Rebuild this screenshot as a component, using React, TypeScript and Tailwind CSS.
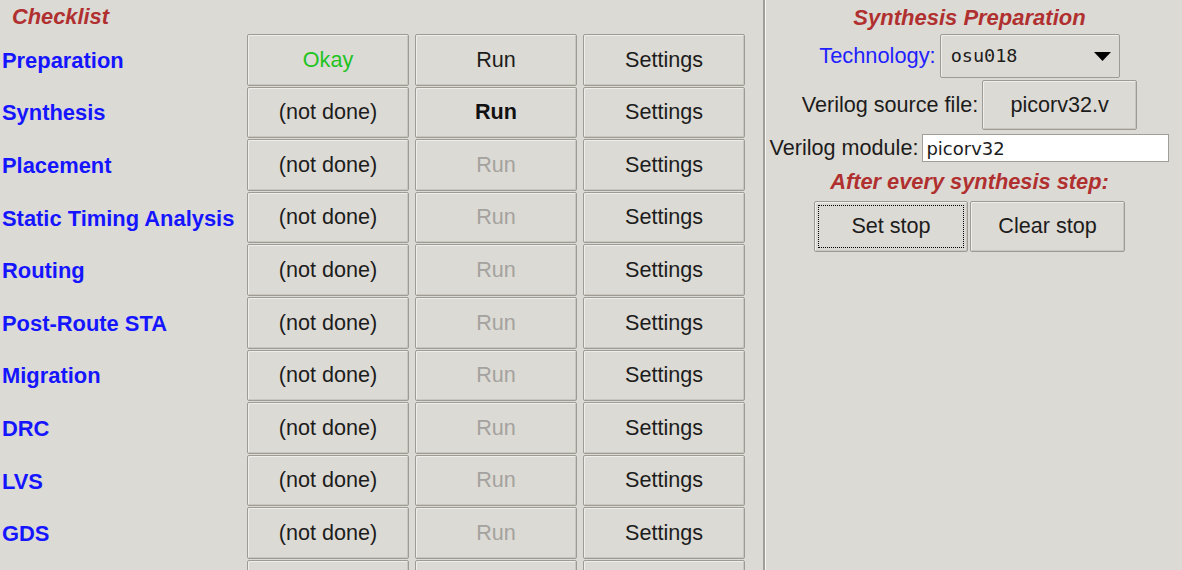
import React from "react";

type Step = { name: string; status: string; ok?: boolean; run: "enabled" | "active" | "disabled" };

const steps: Step[] = [
  { name: "Preparation", status: "Okay", ok: true, run: "enabled" },
  { name: "Synthesis", status: "(not done)", run: "active" },
  { name: "Placement", status: "(not done)", run: "disabled" },
  { name: "Static Timing Analysis", status: "(not done)", run: "disabled" },
  { name: "Routing", status: "(not done)", run: "disabled" },
  { name: "Post-Route STA", status: "(not done)", run: "disabled" },
  { name: "Migration", status: "(not done)", run: "disabled" },
  { name: "DRC", status: "(not done)", run: "disabled" },
  { name: "LVS", status: "(not done)", run: "disabled" },
  { name: "GDS", status: "(not done)", run: "disabled" },
];

// Tk "clam" style raised button
const TkButton: React.FC<{ className?: string; children?: React.ReactNode }> = ({ className = "", children }) => (
  <div
    className={
      "flex items-center justify-center rounded-[2px] border border-[#9e9b94] bg-[#dcdad5] shadow-[inset_1px_1px_0_#efeeeb,inset_-1px_-1px_0_#c9c6bf] text-[21.6px] " +
      className
    }
  >
    {children}
  </div>
);

const App: React.FC = () => {
  return (
    <div className="flex h-[570px] w-[1182px] overflow-hidden bg-[#dcdad5] font-['Liberation_Sans',Arial,sans-serif] text-[#1c1c1c]">
      {/* Checklist panel */}
      <div className="w-[763px] shrink-0">
        <div className="flex h-[34px] items-center pl-[12px] text-[21.8px] font-bold italic text-[#b03030]">Checklist</div>
        <div className="grid grid-cols-[239px_162px_162px_162px] gap-x-[6px] gap-y-[1px] pl-[2px]">
          {steps.map((s) => (
            <React.Fragment key={s.name}>
              <div className="flex h-[51.6px] items-center whitespace-nowrap pt-[3px] text-[21.9px] font-bold text-[#1515ff]">{s.name}</div>
              <TkButton className={s.ok ? "text-[#22c322]" : ""}>{s.status}</TkButton>
              <TkButton
                className={
                  s.run === "active" ? "font-bold text-[#111]" : s.run === "disabled" ? "text-[#a4a29e]" : ""
                }
              >
                Run
              </TkButton>
              <TkButton>Settings</TkButton>
            </React.Fragment>
          ))}
          {/* next row, only its top edge is in view */}
          <div className="h-[51.6px]" />
          <TkButton />
          <TkButton />
          <TkButton />
        </div>
      </div>

      {/* divider */}
      <div className="w-[3px] shrink-0 border-r border-[#f7f6f3] bg-[#a19e97]" />

      {/* Synthesis preparation panel */}
      <div className="flex flex-1 flex-col items-center pr-[10px] pl-[1px]">
        <div className="flex h-[34px] items-center text-[22px] font-bold italic text-[#b03030]">Synthesis Preparation</div>

        <div className="flex h-[44px] items-center gap-[4px]">
          <span className="text-[21.8px] text-[#1f1fff]">Technology:</span>
          <div className="flex h-[44px] w-[180px] items-center justify-between rounded-[2px] border border-[#9e9b94] bg-[#dcdad5] pr-[8px] pl-[10px] shadow-[inset_1px_1px_0_#efeeeb]">
            <span className="font-['DejaVu_Sans_Mono',monospace] text-[18.5px]">osu018</span>
            <svg width="17" height="9" viewBox="0 0 17 9">
              <polygon points="0,0 17,0 8.5,9" fill="#000" />
            </svg>
          </div>
        </div>

        <div className="mt-[2px] flex h-[50px] items-center gap-[4px]">
          <span className="text-[21.6px]">Verilog source file:</span>
          <TkButton className="h-[50px] w-[155px]">picorv32.v</TkButton>
        </div>

        <div className="mt-[4px] flex h-[28px] items-center gap-[4px]">
          <span className="text-[21.6px]">Verilog module:</span>
          <div className="flex h-[28px] w-[247px] items-center border border-[#a19e97] bg-white pl-[3px] font-['DejaVu_Sans',sans-serif] text-[18px]">
            picorv32
          </div>
        </div>

        <div className="flex h-[39px] items-center pt-[2px] text-[21.8px] font-bold italic text-[#b03030]">
          After every synthesis step:
        </div>

        <div className="flex gap-[2px]">
          <TkButton className="h-[51px] w-[154px] p-[3px]">
            <div className="flex h-full w-full items-center justify-center border border-dotted border-black">Set stop</div>
          </TkButton>
          <TkButton className="h-[51px] w-[155px]">Clear stop</TkButton>
        </div>
      </div>
    </div>
  );
};

export default App;
